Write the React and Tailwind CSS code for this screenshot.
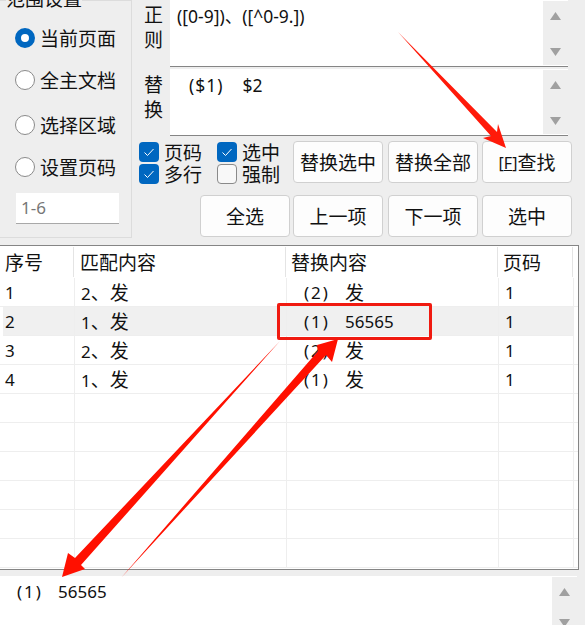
import React from 'react';

const font = "font-['Noto_Sans','Noto_Sans_CJK_SC',sans-serif]";

const Radio = ({ label, checked }) => (
    <div className="flex items-center gap-[5px] h-[20px]">
        {checked ? (
            <span className="w-[20px] h-[20px] rounded-full border-[6px] border-[#0067c0] bg-white"></span>
        ) : (
            <span className="w-[20px] h-[20px] rounded-full border border-[#8a8a8a] bg-white"></span>
        )}
        <span className="block text-[19px] leading-[20px] pt-[2px] text-[#111]">{label}</span>
    </div>
);

const Check = ({ label, checked }) => (
    <div className="flex items-center gap-[5px] h-[22px]">
        {checked ? (
            <span className="w-[20px] h-[20px] rounded-[4px] bg-[#0067c0] flex items-center justify-center">
                <svg width="12" height="12" viewBox="0 0 12 12" fill="none">
                    <path d="M1.5 6.5 L4.5 9.5 L10.5 3" stroke="white" strokeWidth="1" />
                </svg>
            </span>
        ) : (
            <span className="w-[20px] h-[20px] rounded-[4px] border border-[#8a8a8a] bg-[#f8f8f8]"></span>
        )}
        <span className="block text-[19px] leading-[20px] pt-[2px] text-[#111]">{label}</span>
    </div>
);

const Btn = ({ children, className = '' }) => (
    <button className={`${className} w-[90px] h-[42px] shrink-0 rounded-[4px] border border-[#d0d0d0] bg-[#fdfdfd] text-[19px] text-[#111] pt-[2px] flex items-center justify-center`}>
        {children}
    </button>
);

const ScrollBar = ({ className }) => (
    <div className={`w-[25px] bg-[#eeeeee] flex flex-col items-center justify-between pt-[11px] pb-[9px] ${className}`}>
        <svg width="11" height="8" viewBox="0 0 11 8"><path d="M5.5 0 L11 8 L0 8 Z" fill="#a0a0a0" /></svg>
        <svg width="11" height="8" viewBox="0 0 11 8"><path d="M5.5 8 L11 0 L0 0 Z" fill="#a0a0a0" /></svg>
    </div>
);

const TextBox = ({ children }) => (
    <div className="w-[398px] h-[67px] bg-white border-b border-[#858585] flex justify-between">
        <div className="text-[17.5px] leading-[20px] text-[#111] pl-[7px] pt-[6px] whitespace-pre">{children}</div>
        <ScrollBar className="my-[1px]" />
    </div>
);

// 带括号的替换内容: (1)   56565
const Replaced = ({ no, text }) => (
    <span className="flex">
        <span className="block w-[41px] text-[17px] tracking-[2px]">({no})</span>
        <span className={text === '发' ? 'block text-[19px]' : 'block text-[17px]'}>{text}</span>
    </span>
);

const rows = [
    { id: '1', match: '2', no: '2', text: '发', page: '1' },
    { id: '2', match: '1', no: '1', text: '56565', page: '1' },
    { id: '3', match: '2', no: '2', text: '发', page: '1' },
    { id: '4', match: '1', no: '1', text: '发', page: '1' },
    {}, {}, {}, {}, {}, {},
];

const Arrows = () => (
    <svg className="absolute top-0 left-0 pointer-events-none" width="585" height="625" viewBox="0 0 585 625">
        <polygon points="398,32 497,132 498,124 506,148 483,138 491,136" fill="#ff1a0a" />
        <polygon points="280,341 75,558 68,553 62,577 85,569 81,565" fill="#ff1000" />
        <polygon points="121,578 318,351 317,345 338,339 332,362 326,355" fill="#ff1000" />
    </svg>
);

export default function App() {
    return (
        <div className={`relative w-[585px] h-[625px] overflow-hidden bg-[#eeeeee] ${font}`}>
            <div className="flex h-[245px]">
                {/* 范围设置 */}
                <div className="relative w-[132px] h-[238px] border-t border-r border-b border-[#dcdcdc] flex flex-col pl-[15px]">
                    <div className="text-[19px] leading-[20px] text-[#111] absolute left-[6px] top-[-12px] bg-[#eeeeee]">范围设置</div>
                    <div className="flex flex-col mt-[27px]">
                        <Radio label="当前页面" checked />
                        <div className="h-[22px]"></div>
                        <Radio label="全主文档" />
                        <div className="h-[25px]"></div>
                        <Radio label="选择区域" />
                        <div className="h-[22px]"></div>
                        <Radio label="设置页码" />
                    </div>
                    <div className="w-[103px] h-[31px] mt-[16px] ml-[1px] bg-white border-b border-[#a8a8a8] text-[17px] leading-[30px] text-[#777] pl-[5px]">1-6</div>
                </div>

                <div className="flex flex-col pl-[7px] flex-1">
                    {/* 正则 替换 */}
                    <div className="flex h-[67px]">
                        <div className="w-[31px] text-[19px] leading-[25px] text-[#111] pl-[5px] pt-[3px]">正<br />则</div>
                        <TextBox>{'([0-9])、([^0-9.])'}</TextBox>
                    </div>
                    <div className="flex h-[67px] mt-[2px]">
                        <div className="w-[31px] text-[19px] leading-[25px] text-[#111] pl-[5px] pt-[4px]">替<br />换</div>
                        <TextBox>
                            <span className="flex pl-[12px]">
                                <span className="block tracking-[1px]">($1)</span>
                                <span className="block ml-[19px]">$2</span>
                            </span>
                        </TextBox>
                    </div>

                    <div className="flex mt-[5px]">
                        <div className="flex flex-col w-[78px]">
                            <Check label="页码" checked />
                            <Check label="多行" checked />
                        </div>
                        <div className="flex flex-col w-[76px]">
                            <Check label="选中" checked />
                            <Check label="强制" />
                        </div>
                        <Btn>替换选中</Btn>
                        <Btn className="ml-[5px]">替换全部</Btn>
                        <Btn className="ml-[4px]"><span className="text-[16px]">[<u>F</u>]</span>查找</Btn>
                    </div>
                    <div className="flex mt-[10px] pl-[61px]">
                        <Btn>全选</Btn>
                        <Btn className="ml-[3px]">上一项</Btn>
                        <Btn className="ml-[5px]">下一项</Btn>
                        <Btn className="ml-[4px]">选中</Btn>
                    </div>
                </div>
            </div>

            {/* 结果表格 */}
            <div className="w-[579px] h-[325px] bg-white border-t border-r border-b border-[#858585] pt-[1px]">
                <div className="flex h-[31px] text-[19px] leading-[33px] text-[#111]">
                    <div className="w-[74px] pl-[5px] border-r border-[#e4e4e4] mb-[1px]">序号</div>
                    <div className="w-[212px] pl-[6px] border-r border-[#e4e4e4] mb-[1px]">匹配内容</div>
                    <div className="w-[212px] pl-[5px] border-r border-[#e4e4e4] mb-[1px]">替换内容</div>
                    <div className="w-[75px] pl-[5px] border-r border-[#e4e4e4] mb-[1px]">页码</div>
                </div>
                {rows.map((r, i) => (
                    <div key={i} className={`flex h-[29px] border-b border-[#eeeeee] text-[17px] leading-[30px] text-[#111] ${i === 1 ? 'bg-[#f0f0f0] ml-[3px] w-[571px]' : ''}`}>
                        <div className={`${i === 1 ? 'w-[72px] pl-[2px]' : 'w-[75px] pl-[5px]'} border-r border-[#eeeeee]`}>{r.id}</div>
                        <div className="w-[212px] pl-[6px] border-r border-[#eeeeee]">
                            {r.match && <>{r.match}<span className="text-[19px]">、发</span></>}
                        </div>
                        <div className="w-[212px] pl-[17px] border-r border-[#eeeeee]">
                            {r.no && <Replaced no={r.no} text={r.text} />}
                        </div>
                        <div className="w-[75px] pl-[6px] border-r border-[#eeeeee]">{r.page}</div>
                    </div>
                ))}
            </div>

            {/* 预览 */}
            <div className="w-[577px] h-[49px] mt-[6px] bg-white flex justify-between overflow-hidden">
                <div className="leading-[24px] text-[#111] pl-[17px] pt-[4px]">
                    <Replaced no="1" text="56565" />
                </div>
                <ScrollBar className="h-[59px] mt-[1px] shrink-0" />
            </div>

            {/* 红框 */}
            <div className="absolute left-[277px] top-[303px] w-[155px] h-[37px] border-[3px] border-[#f01a10] rounded-[2px]"></div>
            <Arrows />
        </div>
    );
}
